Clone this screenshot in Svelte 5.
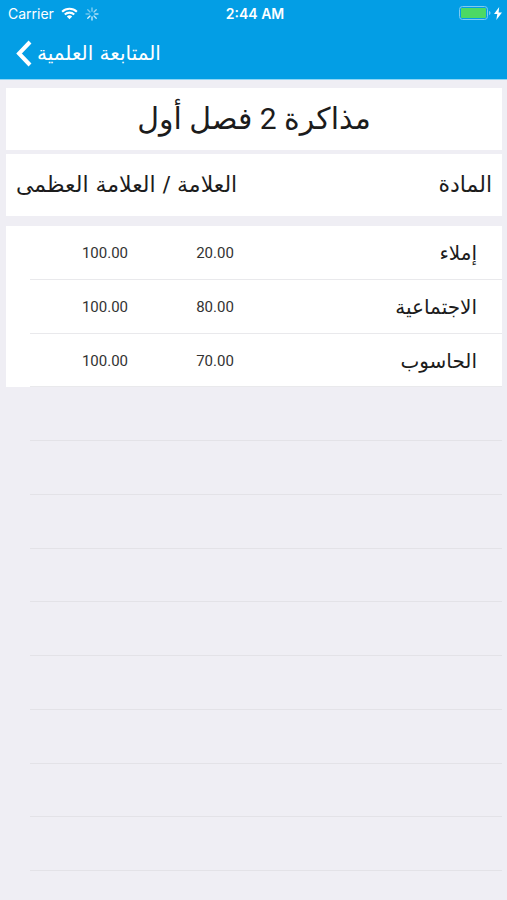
<script>
	const marks = [
		{ subject: 'إملاء', mark: '20.00', max: '100.00' },
		{ subject: 'الاجتماعية', mark: '80.00', max: '100.00' },
		{ subject: 'الحاسوب', mark: '70.00', max: '100.00' }
	];

	const emptyRows = Array(9);
	const spokes = [0, 45, 90, 135, 180, 225, 270, 315];
</script>

<div class="screen">
	<header class="top">
		<div class="status">
			<div class="status__side">
				<span>Carrier</span>
				<svg class="wifi" viewBox="0 0 18 13" aria-hidden="true">
					<path d="M1.2 4.6a11.3 11.3 0 0 1 15.6 0" />
					<path d="M4 7.6a7.2 7.2 0 0 1 10 0" />
					<path class="wifi__dot" d="M9 12.6 6.2 9.8a4 4 0 0 1 5.6 0Z" />
				</svg>
				<svg class="spinner" viewBox="0 0 14 14" aria-hidden="true">
					{#each spokes as angle, i}
						<path
							d="M7 1v3.2"
							transform="rotate({angle} 7 7)"
							opacity={0.4 + ((i + 2) % 8) * 0.07}
						/>
					{/each}
				</svg>
			</div>
			<span class="status__time">2:44 AM</span>
			<div class="status__side status__side--end">
				<svg class="battery" viewBox="0 0 32 15" aria-hidden="true">
					<rect class="battery__case" x="0.5" y="0.5" width="28" height="13" rx="3" />
					<rect class="battery__level" x="2" y="2" width="25" height="10" rx="1" />
					<path class="battery__cap" d="M30 5c2 .6 2 3.4 0 4Z" />
				</svg>
				<svg class="bolt" viewBox="0 0 8 13" aria-hidden="true">
					<path d="M5.200 0 0 7h3.300L2.300 13 8 5.400H4.600Z" />
				</svg>
			</div>
		</div>
		<nav class="nav">
			<button class="back" type="button">
				<svg viewBox="0 0 16 27" aria-hidden="true">
					<path d="M14 2 3 13.5 14 25" />
				</svg>
				<span dir="rtl">المتابعة العلمية</span>
			</button>
		</nav>
	</header>

	<main class="content" dir="rtl">
		<h1 class="title">مذاكرة 2 فصل أول</h1>

		<table class="marks">
			<thead>
				<tr class="head">
					<th scope="col">المادة</th>
					<th scope="col" colspan="2">العلامة / العلامة العظمى</th>
				</tr>
			</thead>
			<tbody>
				{#each marks as row}
					<tr class="row">
						<td class="subject">{row.subject}</td>
						<td class="number">{row.mark}</td>
						<td class="number">{row.max}</td>
					</tr>
				{/each}
			</tbody>
		</table>

		<div class="blank" aria-hidden="true">
			{#each emptyRows as _}
				<div class="blank__row"></div>
			{/each}
		</div>
	</main>
</div>

<style>
	:global(body) {
		margin: 0;
		background: #efeef4;
	}

	.screen {
		min-height: 100vh;
		box-sizing: border-box;
		background: #efeef4;
		color: #1c1c1c;
		font-family: 'DejaVu Sans', sans-serif;
	}

	.top {
		background: #039ee5;
		color: #fff;
		border-bottom: 1px solid #8fd6f5;
	}

	.status {
		display: grid;
		grid-template-columns: 1fr auto 1fr;
		align-items: center;
		height: 27px;
		padding: 0 5px 0 8px;
		font-family: Inter, sans-serif;
		font-size: 14px;
	}

	.status__side {
		display: flex;
		align-items: center;
		gap: 7px;
	}

	.status__side--end {
		justify-content: flex-end;
		gap: 3px;
	}

	.status__time {
		font-weight: 600;
	}

	.wifi {
		width: 17px;
		height: 13px;
		fill: none;
		stroke: #fff;
		stroke-width: 2.2;
	}

	.wifi__dot {
		fill: #fff;
		stroke: none;
	}

	.spinner {
		width: 14px;
		height: 14px;
		stroke: #fff;
		stroke-width: 1.3;
		stroke-linecap: round;
	}

	.battery {
		width: 32px;
		height: 15px;
	}

	.battery__case {
		fill: none;
		stroke: #7fcaf0;
	}

	.battery__level {
		fill: #4cd964;
	}

	.battery__cap {
		fill: #7fcaf0;
	}

	.bolt {
		width: 8px;
		height: 13px;
		fill: #fff;
	}

	.nav {
		display: flex;
		align-items: center;
		height: 52px;
		padding: 0 16px;
	}

	.back {
		display: flex;
		align-items: center;
		gap: 5px;
		padding: 0;
		border: 0;
		background: none;
		color: inherit;
		font-family: 'DejaVu Sans', sans-serif;
		font-size: 20px;
		line-height: 28px;
		cursor: pointer;
	}

	.back svg {
		width: 16px;
		height: 27px;
		fill: none;
		stroke: #fff;
		stroke-width: 4;
	}

	.content {
		padding: 8px 5px 0 6px;
	}

	.title {
		margin: 0 0 4px;
		background: #fff;
		font-family: Roboto, 'DejaVu Sans', sans-serif;
		font-size: 30px;
		font-weight: 400;
		line-height: 62px;
		text-align: center;
	}

	.marks,
	.marks thead,
	.marks tbody {
		display: block;
	}

	.head {
		display: flex;
		justify-content: space-between;
		margin-bottom: 10px;
		padding: 0 10px;
		background: #fff;
		font-size: 22px;
		line-height: 62px;
	}

	.head th {
		padding: 0;
		font-weight: 400;
	}

	.row {
		position: relative;
		display: grid;
		grid-template-columns: 1fr 110px 110px;
		height: 54px;
		padding: 0 25px 0 44px;
		background: #fff;
		line-height: 54px;
	}

	.row:last-child {
		height: 53px;
	}

	.row td {
		padding: 0;
	}

	.row::after {
		content: '';
		position: absolute;
		inset: auto 0 0 24px;
		height: 1px;
		background: #e9e9ec;
	}

	.subject {
		font-size: 20px;
	}

	.number {
		font-family: Roboto, sans-serif;
		font-size: 15px;
		text-align: center;
		color: #333;
	}

	.blank {
		padding-left: 24px;
	}

	.blank__row {
		box-sizing: border-box;
		height: 54px;
		border-bottom: 1px solid #e3e2e7;
	}

	.blank__row:nth-child(4n) {
		height: 53px;
	}
</style>
